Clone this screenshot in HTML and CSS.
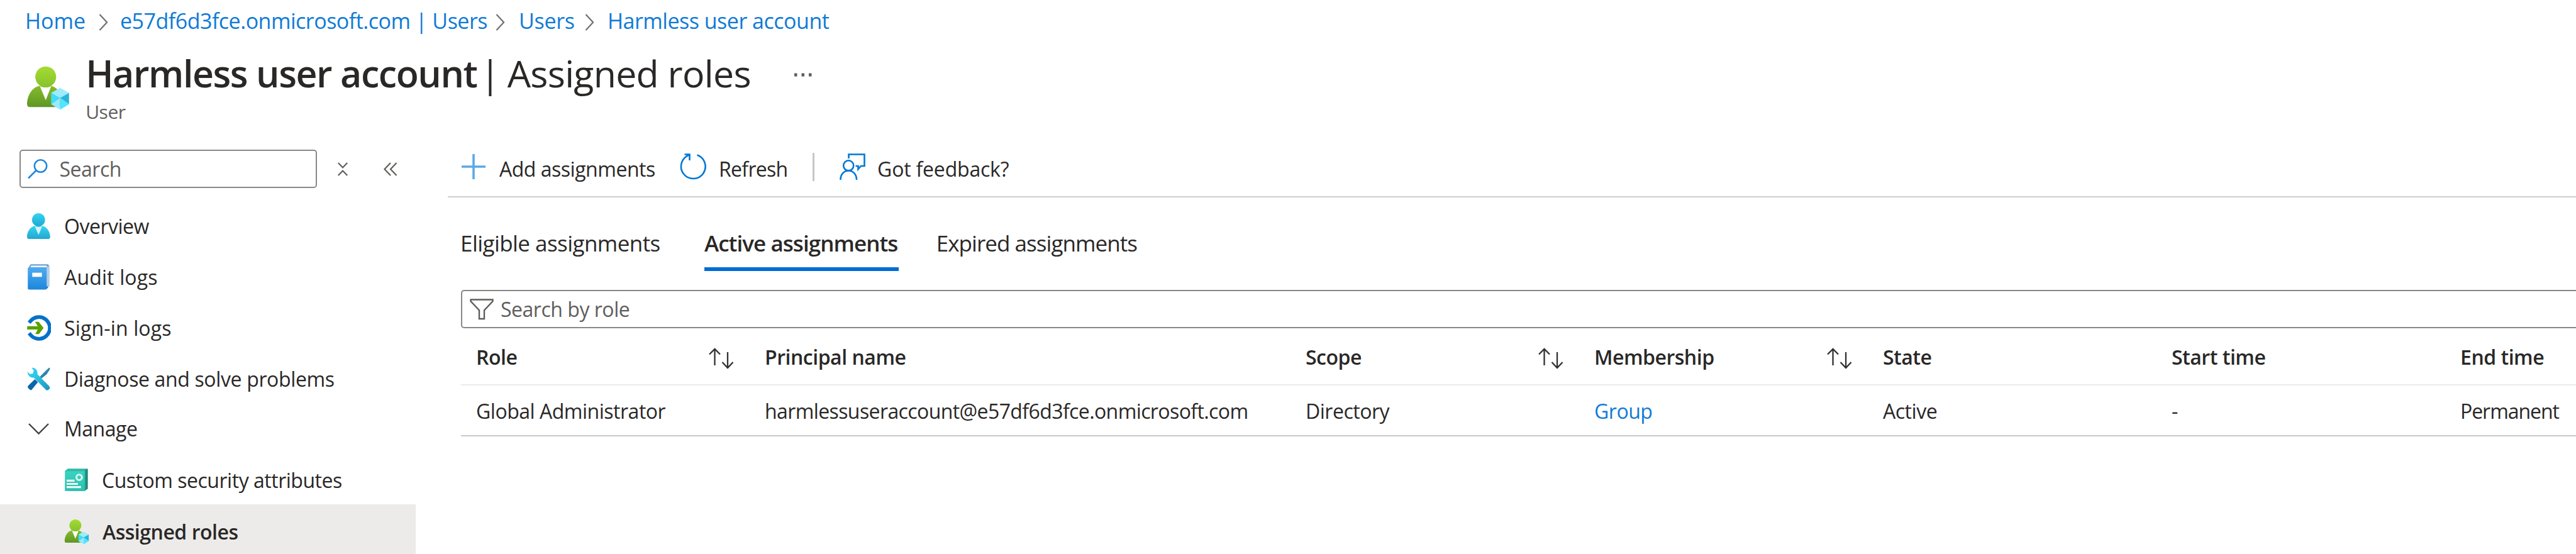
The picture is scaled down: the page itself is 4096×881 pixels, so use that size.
FILE: index.html
```
<!DOCTYPE html>
<html lang="en">
<head>
<meta charset="utf-8">
<title>Harmless user account | Assigned roles</title>
<link rel="stylesheet" href="styles.css">
</head>
<body>
<svg class="defs" aria-hidden="true">
  <defs>
    <linearGradient id="green" x1="0" y1="0" x2="0" y2="1"><stop offset="0" stop-color="#a4dc32"/><stop offset="1" stop-color="#86c22c"/></linearGradient>
    <linearGradient id="greenBody" x1="0" y1="0" x2="0" y2="1"><stop offset="0" stop-color="#86bd2a"/><stop offset="1" stop-color="#5e9624"/></linearGradient>
    <linearGradient id="cyan" x1="0" y1="0" x2="0" y2="1"><stop offset="0" stop-color="#32d4f5"/><stop offset="1" stop-color="#22a7cf"/></linearGradient>
    <linearGradient id="book" x1="0" y1="0" x2="0" y2="1"><stop offset="0" stop-color="#50abf1"/><stop offset="1" stop-color="#1b87dc"/></linearGradient>
    <linearGradient id="wrench" x1="0" y1="0" x2="1" y2="1"><stop offset="0" stop-color="#32d4f5"/><stop offset=".4" stop-color="#2cc4e8"/><stop offset="1" stop-color="#1a92bb"/></linearGradient>
    <linearGradient id="teal" x1="0" y1="0" x2="0" y2="1"><stop offset="0" stop-color="#3bd3c0"/><stop offset="1" stop-color="#2cbfad"/></linearGradient>
    <linearGradient id="tealBack" x1="0" y1="0" x2="1" y2="0"><stop offset=".8" stop-color="#2cb9a8"/><stop offset="1" stop-color="#14796f"/></linearGradient>
    <symbol id="user-role" viewBox="50 35 290 300">
      <path d="M136 168C90 176 56 225 54 285q0 22 20 22H268q14 0 14-16C280 225 260 180 212 168z" fill="url(#greenBody)"/>
      <path d="M138 170L176 262L212 170Q175 186 138 170z" fill="#fff"/>
      <circle cx="176" cy="110" r="68" fill="url(#green)"/>
      <path d="M270 182L328 214L270 250L211 214z" fill="#9cebff"/>
      <path d="M328 214V288L270 247z" fill="#2bb4d9"/>
      <path d="M211 214V288L270 247z" fill="#40dcf8"/>
      <path d="M211 288L270 247V324z" fill="#9aeaff"/>
      <path d="M328 288L270 247V324z" fill="#50e6ff"/>
    </symbol>
    <symbol id="sort" viewBox="0 0 42 34">
      <path d="M10.5 28V2M2 10.5L10.5 2L19 10.5M31 7V32M22.500 23L31 32L39.500 23" fill="none" stroke="#323130" stroke-width="2.3"/>
    </symbol>
    <symbol id="crumb" viewBox="0 0 15 27"><path d="M1.500 1L13 13.500L1.500 26" fill="none" stroke="#75726f" stroke-width="2.300"/></symbol>
  </defs>
</svg>

<div class="page">
  <nav class="breadcrumb">
    <a class="c1">Home</a><svg class="chev"><use href="#crumb"/></svg>
    <a class="c2">e57df6d3fce.onmicrosoft.com | Users</a><svg class="chev"><use href="#crumb"/></svg>
    <a class="c3">Users</a><svg class="chev"><use href="#crumb"/></svg>
    <a class="c4">Harmless user account</a>
  </nav>

  <header class="header">
    <svg class="header-icon"><use href="#user-role"/></svg>
    <div>
      <h1 class="title"><span class="name">Harmless user account</span><span class="bar">|</span><span class="section">Assigned roles</span>
        <svg class="dots" viewBox="0 0 28 6"><path d="M0 .5h4.500v5H0zM11.500 .5h4.500v5h-4.500zM23 .5h4.500v5H23z" fill="#605e5c"/></svg></h1>
      <div class="subtitle">User</div>
    </div>
  </header>

  <div class="body">
    <aside class="sidebar">
      <div class="side-tools">
        <div class="search">
          <svg class="search-icon" viewBox="0 0 32 32"><circle cx="20.500" cy="11" r="9.700"/><path d="M13.500 18L1 30.500"/></svg>
          <span>Search</span>
        </div>
        <svg class="collapse" viewBox="0 0 16 22"><path d="M.8 1L8 8.500L15.200 1M.8 21L8 13.500L15.200 21"/></svg>
        <svg class="hide" viewBox="0 0 22 22"><path d="M11 1L1.500 11L11 21M20.500 1L11 11L20.500 21"/></svg>
      </div>

      <ul class="menu">
        <li class="item">
          <svg class="icon" viewBox="50 35 160 176"><path d="M103 122C75 128 54 160 54 192q0 15 12 15H194q11 0 11-15C203 160 184 128 154 122z" fill="url(#cyan)"/><path d="M105 124L129 180L153 124Q129 134 105 124z" fill="#d8f5fc"/><circle cx="129" cy="82" r="43" fill="url(#cyan)"/></svg>
          <span>Overview</span></li>
        <li class="item">
          <svg class="icon" viewBox="50 368 160 176"><path d="M68 392L78 374H190Q201 374 201 386V514L186 532H170V392z" fill="#b4cde4"/><path d="M66 392L78 374H190L196 386H186L184 380H84L76 392z" fill="#5a94c4"/><path d="M80 382H180V392H76z" fill="#eef5fb"/><path d="M180 518H192L182 536z" fill="#1865a8"/><path d="M59 400q0-8 8-8H182V530q0 8-8 8H67q-8 0-8-8z" fill="url(#book)"/><path d="M88 428h63v27H88z" fill="#fff"/></svg>
          <span class="ls-b">Audit logs</span></li>
        <li class="item">
          <svg class="icon" viewBox="50 700 160 176"><path d="M75 745A71 71 0 1 1 75 831" fill="none" stroke="#0072c9" stroke-width="24" stroke-linecap="square"/><path d="M55 777H124L106 748H130L162 788L132 828H108L124 798H55z" fill="#57a300"/></svg>
          <span class="ls-b">Sign-in logs</span></li>
        <li class="item">
          <svg class="icon" viewBox="50 1032 160 176"><path d="M198 1046L205 1054L182 1090L148 1118L137 1107L165 1078z" fill="#2c87ad"/><path d="M105 1122L125 1142L84 1192Q76 1196 70 1188L60 1178Q56 1170 62 1164z" fill="#0a66ab"/><path d="M84 1047C106 1044 126 1064 122 1090L201 1170Q206 1178 200 1186L192 1193Q184 1197 177 1191L98 1112C76 1116 56 1096 57 1074L72 1088L92 1086L98 1066z" fill="url(#wrench)"/></svg>
          <span class="ls-a">Diagnose and solve problems</span></li>
        <li class="item group">
          <svg class="icon" viewBox="0 0 39 43"><path d="M4 14L19.500 29.500L35 14" fill="none" stroke="#45423f" stroke-width="2.400"/></svg>
          <span>Manage</span></li>
        <li class="item sub">
          <svg class="icon" viewBox="30 48 160 176"><path d="M35 78L54 62H184V192L165 207H60z" fill="url(#tealBack)"/><path d="M35 76H164V207H35z" fill="url(#teal)"/><path d="M35 78L54 62H172L164 78z" fill="#30b9a9"/><path d="M46 133h52v13H46zM46 154h74v13H46zM46 175h94v13H46z" fill="#e9faf8"/><circle cx="128" cy="118" r="18" fill="none" stroke="#d5f6f2" stroke-width="13"/></svg>
          <span>Custom security attributes</span></li>
        <li class="item sub selected">
          <svg class="icon role"><use href="#user-role"/></svg>
          <span>Assigned roles</span></li>
      </ul>
    </aside>

    <main class="main">
      <div class="toolbar">
        <div class="cmd add"><svg class="plus" viewBox="0 0 38 40"><path d="M0 20H38M19 0V40"/></svg><span>Add assignments</span></div>
        <div class="cmd refresh"><svg class="cmd-icon" viewBox="0 0 42 42"><path d="M27.500 2.500A19.300 19.300 0 1 1 14 2.900M7.500 1.500H15.500V11"/></svg><span>Refresh</span></div>
        <div class="divider"></div>
        <div class="cmd feedback"><svg class="cmd-icon" viewBox="0 0 42 42"><path d="M14.500 8V1.500H39.500V20H34L29.500 25V20H25.500M1.500 42C1.500 33 7 27.500 14.200 27.500S27 33 27 42"/><circle cx="14.200" cy="19.300" r="8"/></svg><span>Got feedback?</span></div>
      </div>

      <div class="tabs">
        <div class="tab">Eligible assignments</div>
        <div class="tab active">Active assignments</div>
        <div class="tab expired">Expired assignments</div>
      </div>

      <div class="filter">
        <svg class="funnel" viewBox="0 0 38 34"><path d="M1.500 1.500H36.500V4L23 18.500V32H15V18.500L1.500 4z"/></svg>
        <span>Search by role</span>
      </div>

      <div class="grid">
        <div class="row head">
          <div class="cell">Role<svg class="sort"><use href="#sort"/></svg></div>
          <div class="cell">Principal name</div>
          <div class="cell">Scope<svg class="sort"><use href="#sort"/></svg></div>
          <div class="cell">Membership<svg class="sort"><use href="#sort"/></svg></div>
          <div class="cell">State</div>
          <div class="cell">Start time</div>
          <div class="cell">End time</div>
        </div>
        <div class="row data">
          <div class="cell">Global Administrator</div>
          <div class="cell mail">harmlessuseraccount@e57df6d3fce.onmicrosoft.com</div>
          <div class="cell">Directory</div>
          <div class="cell"><a>Group</a></div>
          <div class="cell">Active</div>
          <div class="cell">-</div>
          <div class="cell perm">Permanent</div>
        </div>
      </div>
    </main>
  </div>
</div>
</body>
</html>
```
FILE: styles.css
```
* { box-sizing: border-box; }
body {
  margin: 0;
  background: #fff;
  color: #292827;
  font: 32px/44px "Open Sans", "Noto Sans", sans-serif;
  letter-spacing: -0.48px;
  white-space: nowrap;
}
svg { flex: none; display: block; }
a { color: #0f7bd6; }
.defs { position: absolute; width: 0; height: 0; }
.page { width: 4096px; height: 881px; overflow: hidden; }

/* breadcrumb */
.breadcrumb { display: flex; align-items: center; height: 66px; padding-left: 40px; font-size: 34px; letter-spacing: -0.5px; }
.breadcrumb a { flex: none; }
.c1 { width: 117px; letter-spacing: 0; }
.c2 { width: 597px; margin-left: 19px; }
.c3 { width: 105px; margin-left: 22px; letter-spacing: -0.3px; }
.c4 { margin-left: 21px; }
.chev { width: 15px; height: 27px; margin-top: 5px; }

/* title */
.header { display: flex; height: 130px; padding: 14px 0 0 41.5px; }
.header-icon { width: 70.7px; height: 73.200px; margin: 23.500px 24px 0 0; }
.title { display: flex; align-items: center; height: 72px; margin: 0; font-size: 59px; font-weight: 400; line-height: 72px; }
.name { width: 627px; font-weight: 600; letter-spacing: -1.400px; }
.bar { width: 43.500px; }
.section { width: 456px; letter-spacing: -0.700px; }
.dots { width: 28px; height: 6px; margin-top: 6px; }
.subtitle { margin-top: 8px; font-size: 30px; line-height: 36px; color: #605e5c; }

.body { display: flex; height: 685px; }

/* sidebar */
.sidebar { width: 661px; flex: none; }
.side-tools { display: flex; align-items: center; height: 61px; margin: 42px 0 0 31px; }
.search { display: flex; align-items: center; width: 473px; height: 61px; padding-left: 11px; border: 2.6px solid #8a8886; border-radius: 5px; color: #605e5c; }
.search-icon { width: 32px; height: 32px; margin-right: 18.500px; fill: none; stroke: #1f86dc; stroke-width: 2.500px; }
.collapse { width: 16px; height: 22px; margin-left: 33px; }
.hide { width: 22px; height: 22px; margin-left: 57px; }
.collapse, .hide { fill: none; stroke: #605e5c; stroke-width: 2.200px; }
.menu { margin: 20.500px 0 0; padding: 0; list-style: none; }
.item { display: flex; align-items: center; gap: 21.500px; height: 80.900px; padding-left: 41.500px; }
.icon { width: 39px; height: 43px; }
.item.group { height: 77px; }
.item.sub { padding-left: 102px; gap: 21px; }
.item.sub:nth-child(6) { height: 82px; padding-top: 5px; }
.item.selected { height: 87px; background: #edebe9; font-weight: 600; gap: 21px; }
.icon.role { width: 41px; height: 42px; margin-right: -1px; }
.ls-a { letter-spacing: -0.360px; }
.ls-b { letter-spacing: 0.150px; }

/* main */
.main { flex: 1; min-width: 0; margin-left: 51px; }
.toolbar { display: flex; align-items: center; height: 118px; padding: 22px 0 0 22px; border-bottom: 2.600px solid #cfcfcf; }
.cmd { display: flex; align-items: center; }
.cmd span { padding-top: 7px; }
.cmd svg { fill: none; stroke: #0078d4; stroke-width: 2.600px; }
.cmd .plus { width: 38px; height: 40px; margin-right: 22px; stroke: #5aa9e6; stroke-width: 3.600px; }
.cmd-icon { width: 42px; height: 42px; }
.add { width: 347px; }
.refresh { width: 211px; gap: 20px; letter-spacing: -0.700px; }
.divider { width: 2.600px; height: 45px; background: #c8c6c4; }
.feedback { margin-left: 40px; gap: 18.500px; letter-spacing: -0.200px; }

.tabs { display: flex; height: 80px; margin: 37px 0 0 20px; font-size: 35px; line-height: 72px; letter-spacing: -0.550px; }
.tab { width: 388px; }
.tab.active { width: 308.700px; margin-right: 60px; border-bottom: 6px solid #006cd4; font-weight: 600; letter-spacing: -0.950px; }
.tab.expired { letter-spacing: -0.950px; }

.filter { display: flex; align-items: center; height: 61px; margin: 30px 0 0 21px; padding-left: 12px; border: 2.600px solid #8a8886; border-right: 0; border-radius: 5px 0 0 5px; color: #605e5c; }
.funnel { width: 38px; height: 34px; margin-right: 11px; fill: none; stroke: #605e5c; stroke-width: 2.400px; }

.grid { margin-left: 21px; }
.row { display: grid; grid-template-columns: 459px 860px repeat(4, 459px) 1fr; align-items: center; }
.cell { display: flex; align-items: center; padding-left: 24px; }
.head { height: 90.600px; padding-top: 3px; border-bottom: 2.600px solid #edebe9; font-weight: 600; }
.data { height: 81.500px; padding-top: 3px; border-bottom: 2.600px solid #c8c8c8; }
.sort { width: 42px; height: 34px; margin: 4px 24px 0 auto; }
.mail { letter-spacing: -0.600px; }
.perm { letter-spacing: -1.050px; }
```
